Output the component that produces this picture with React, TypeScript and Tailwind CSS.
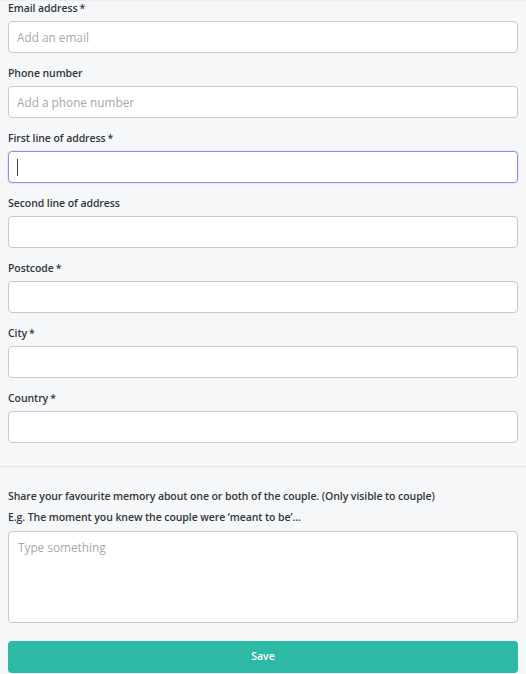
const fields = [
  { label: 'Email address', required: true, placeholder: 'Add an email' },
  { label: 'Phone number', required: false, placeholder: 'Add a phone number' },
  { label: 'First line of address', required: true, placeholder: '', focused: true },
  { label: 'Second line of address', required: false, placeholder: '' },
  { label: 'Postcode', required: true, placeholder: '' },
  { label: 'City', required: true, placeholder: '' },
  { label: 'Country', required: true, placeholder: '' },
];

const Field = ({ label, required, placeholder, focused }: { label: string; required: boolean; placeholder: string; focused?: boolean }) => (
  <div className="mb-[13px]">
    <label className="block text-[10.5px] tracking-[-0.08px] leading-[14px] font-semibold text-[#2f3640] mb-[6px]">
      {label}
      {required && <span className="ml-[2px]">*</span>}
    </label>
    {focused ? (
      <div className="h-8 w-full rounded-[4px] border border-[#8e90e6] bg-white flex items-center pl-[8px] shadow-[0_0_0_1px_rgba(142,144,230,0.15)]">
        <div className="w-px h-[17px] bg-[#3a3f47]" />
      </div>
    ) : (
      <input
        className="block h-8 w-full rounded-[4px] border border-[#c6c9ce] bg-white px-[8px] text-[11.8px] text-[#2f3640] placeholder:text-[#a4a9b0] outline-none"
        placeholder={placeholder}
      />
    )}
  </div>
);

export default function App() {
  return (
    <div className="w-[526px] h-[674px] overflow-hidden bg-[#f6f7f9] font-['Open_Sans',sans-serif]">
      <div className="h-px bg-[#fafbfc] border-b border-[#eceef1]" />
      <div className="flex flex-col px-2">
        {fields.map((f) => (
          <Field key={f.label} {...f} />
        ))}
      </div>
      <div className="mt-[10px] border-t border-[#e3e5e8]" />
      <div className="px-2 pt-[22px]">
        <p className="text-[10.5px] tracking-[-0.08px] leading-[14px] font-semibold text-[#2f3640] mb-[7px]">
          Share your favourite memory about one or both of the couple. (Only visible to couple)
        </p>
        <p className="text-[10.5px] tracking-[-0.08px] leading-[14px] font-semibold text-[#2f3640] mb-[7px]">
          E.g. The moment you knew the couple were ‘meant to be’...
        </p>
        <textarea
          className="block w-full h-[92px] resize-none rounded-[4px] border border-[#c6c9ce] bg-white px-[9px] py-[7px] text-[11.8px] text-[#2f3640] placeholder:text-[#a4a9b0] outline-none"
          placeholder="Type something"
        />
        <button className="mt-[18px] w-full h-8 rounded-[4px] bg-[#2cb9a6] text-white text-[10.5px] font-semibold">
          Save
        </button>
      </div>
    </div>
  );
}
